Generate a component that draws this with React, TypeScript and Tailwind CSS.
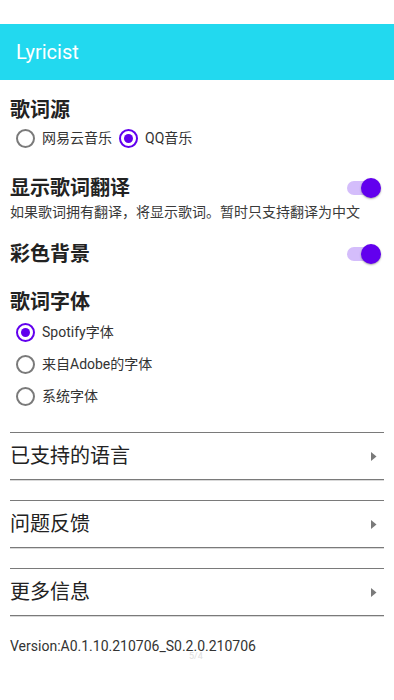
const font = { fontFamily: 'Roboto, "Noto Sans CJK SC", sans-serif' };

const Radio = ({ checked, label }: { checked?: boolean; label: string }) => (
  <div className="flex items-center gap-[7px]">
    {checked ? (
      <span className="flex h-[19px] w-[19px] items-center justify-center rounded-full border-2 border-[#6200ee]">
        <span className="h-[9px] w-[9px] rounded-full bg-[#6200ee]" />
      </span>
    ) : (
      <span className="h-[19px] w-[19px] rounded-full border-2 border-[#7a7a7a]" />
    )}
    <span className="text-[14px] text-[#333]">{label}</span>
  </div>
);

const Toggle = () => (
  <div className="relative h-5 w-[34px]">
    <div className="absolute left-0 top-[3px] h-[14px] w-[28px] rounded-full bg-[#d4bdfb]" />
    <div className="absolute right-0 top-0 h-5 w-5 rounded-full bg-[#6200ee] shadow-[0_1px_2px_rgba(0,0,0,0.35)]" />
  </div>
);

const LinkCard = ({ title, className = "" }: { title: string; className?: string }) => (
  <div
    className={`mx-[10px] flex h-[48px] items-center justify-between border-t border-b border-[#7a7a7a] shadow-[0_1px_0_rgba(0,0,0,0.15)] ${className}`}
  >
    <span className="text-[20px] text-[#222]">{title}</span>
    <svg width="6" height="9" viewBox="0 0 6 9" className="mr-[7px]">
      <path d="M0 0 L5.5 4.5 L0 9 Z" fill="#7a7a7a" />
    </svg>
  </div>
);

export default function App() {
  return (
    <div className="relative h-[700px] w-[394px] overflow-hidden bg-white" style={font}>
      <div className="h-6 bg-white" />
      <div className="flex h-14 items-center bg-[#22d9ef] px-4">
        <span className="text-[20px] text-white">Lyricist</span>
      </div>

      <div className="px-[10px]">
        <div className="mt-4 flex h-7 items-center text-[20px] font-bold text-[#222]">歌词源</div>
        <div className="flex h-7 items-center gap-[7px] pl-[6px]">
          <Radio label="网易云音乐" />
          <Radio checked label="QQ音乐" />
        </div>

        <div className="mt-[22px] flex h-7 items-center justify-between pr-[3px]">
          <span className="text-[20px] font-bold text-[#222]">显示歌词翻译</span>
          <Toggle />
        </div>
        <div className="h-5 text-[14px] leading-5 text-[#3a3a3a]">
          如果歌词拥有翻译，将显示歌词。暂时只支持翻译为中文
        </div>

        <div className="mt-[18px] flex h-7 items-center justify-between pr-[3px]">
          <span className="text-[20px] font-bold text-[#222]">彩色背景</span>
          <Toggle />
        </div>

        <div className="mt-5 flex h-7 items-center text-[20px] font-bold text-[#222]">歌词字体</div>
        <div className="pl-[6px]">
          <div className="flex h-8 items-center">
            <Radio checked label="Spotify字体" />
          </div>
          <div className="flex h-8 items-center">
            <Radio label="来自Adobe的字体" />
          </div>
          <div className="flex h-8 items-center">
            <Radio label="系统字体" />
          </div>
        </div>
      </div>

      <LinkCard title="已支持的语言" className="mt-5" />
      <LinkCard title="问题反馈" className="mt-5" />
      <LinkCard title="更多信息" className="mt-5" />

      <div className="mt-5 px-[10px] text-[14px] leading-5 text-[#333]">
        Version:A0.1.10.210706_S0.2.0.210706
      </div>

      <div className="absolute left-[189px] top-[650px] text-[9px] text-[#ddd]">5/4</div>
    </div>
  );
}
